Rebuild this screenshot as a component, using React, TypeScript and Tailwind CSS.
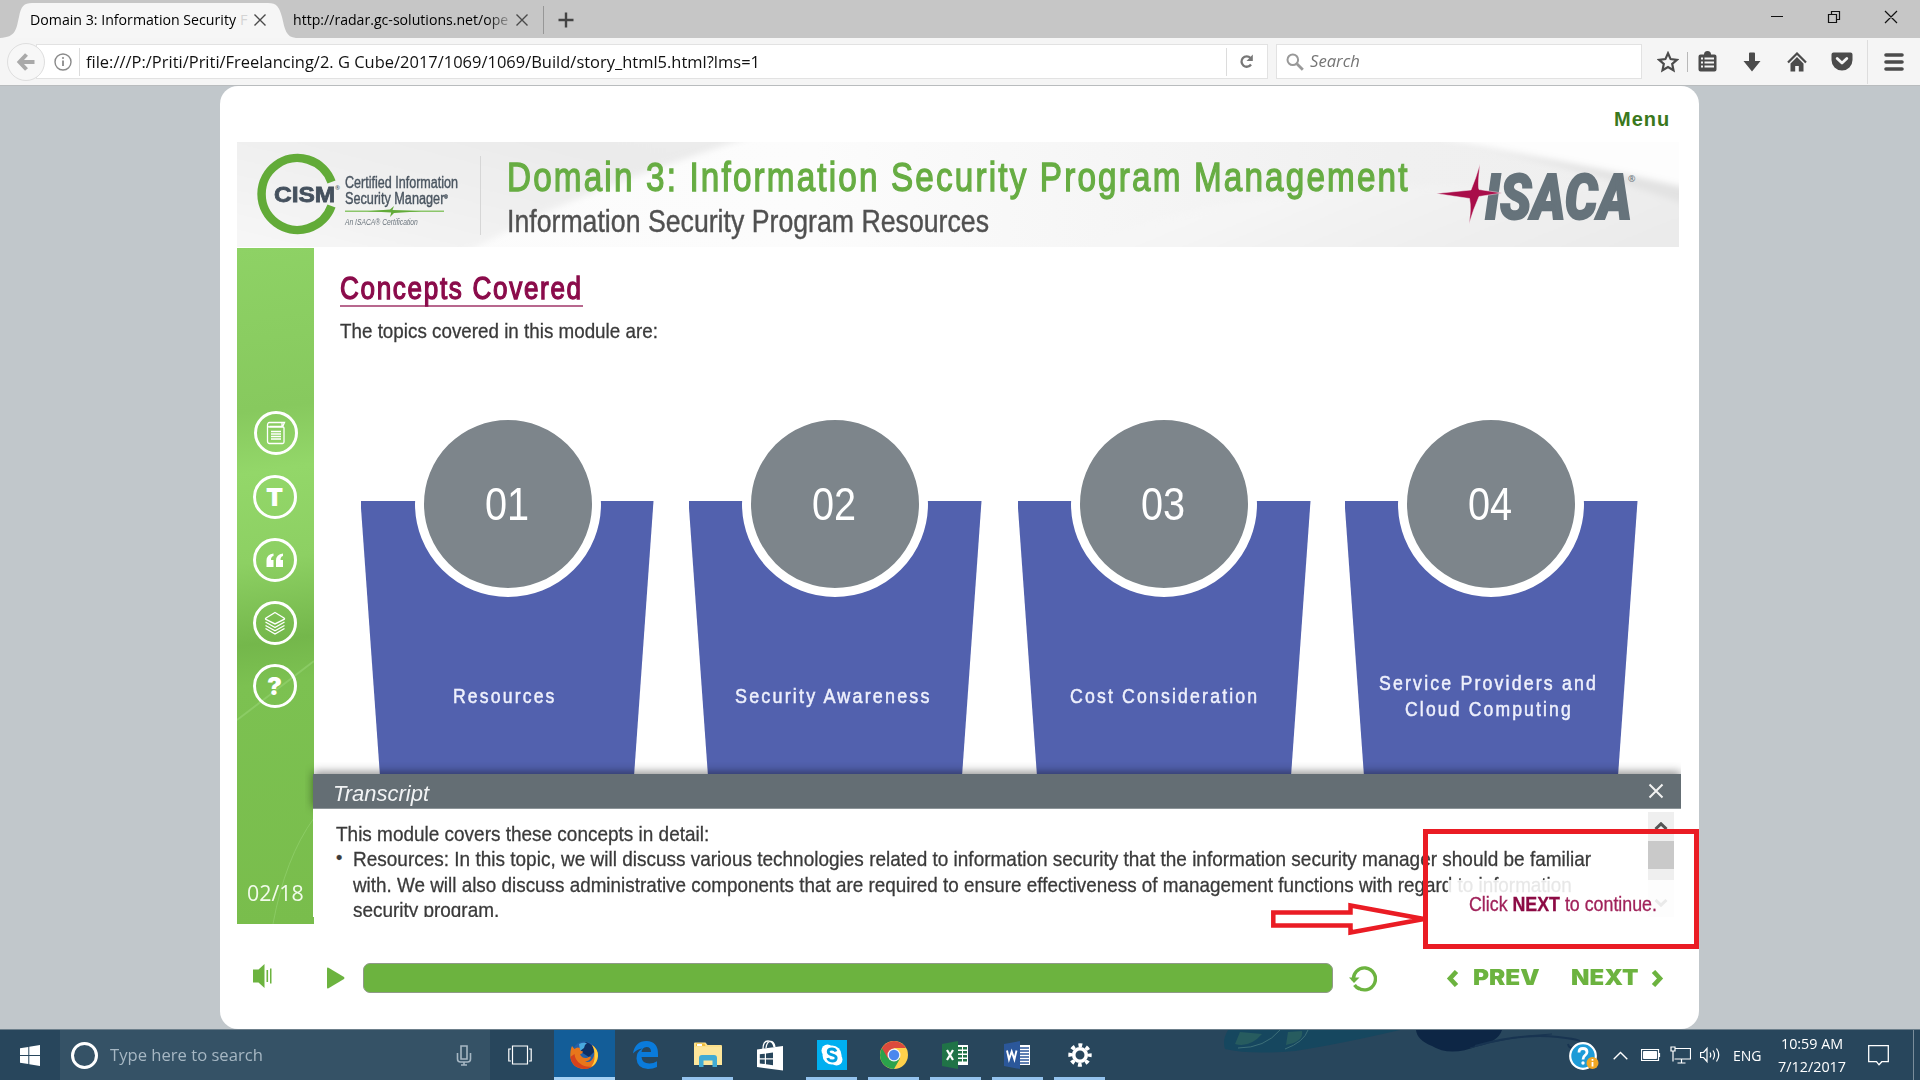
import { useLayoutEffect, useRef, useState, type ReactNode } from "react";

const sans = "font-['Liberation_Sans',sans-serif]";
const ui = "font-['Open_Sans','Noto_Sans',sans-serif]";

/* Single line of text condensed or stretched to fill the width of its box. */
function Fit({ className = "", children }: { className?: string; children: ReactNode }) {
  const outer = useRef<HTMLSpanElement>(null);
  const inner = useRef<HTMLSpanElement>(null);
  const [scale, setScale] = useState(1);
  useLayoutEffect(() => {
    if (outer.current && inner.current) {
      setScale(outer.current.offsetWidth / inner.current.offsetWidth);
    }
  }, []);
  return (
    <span ref={outer} className={`block shrink-0 whitespace-nowrap ${className}`}>
      <span ref={inner} className="inline-block origin-left align-top" style={{ transform: `scaleX(${scale})` }}>
        {children}
      </span>
    </span>
  );
}

function Cross({ className }: { className: string }) {
  return (
    <svg viewBox="0 0 14 14" className={className} fill="none" stroke="currentColor">
      <path d="M1.500 1.500l11 11M12.500 1.500l-11 11" strokeWidth="1.400" />
    </svg>
  );
}

function TabStrip() {
  return (
    <div className={`flex h-[38px] bg-[#c6c6c6] text-[14.5px] leading-[34px] text-black ${ui}`}>
      <div className="relative flex h-[38px] w-[296px] pl-[30px] pt-[3px]">
        <svg className="absolute inset-0 h-[38px] w-[296px]" viewBox="0 0 296 38">
          <path d="M0 38C16 37 16 30 19 17C21 6 24 3 32 3H268C277 3 279 7 282 17C285 30 286 37 296 38Z" fill="#f6f6f6" />
        </svg>
        <Fit className="relative w-[206px]">Domain 3: Information Security</Fit>
        <span className="relative ml-[4px] text-[#d4d4d4]">F</span>
        <Cross className="absolute left-[253px] top-[13px] h-[14px] w-[14px] text-[#4a4a4a]" />
      </div>
      <div className="relative flex w-[248px] pt-[3px]">
        <Fit className="ml-[-3px] w-[215px] [mask-image:linear-gradient(to_right,black_90%,rgba(0,0,0,0.25))]">
          http://radar.gc-solutions.net/ope
        </Fit>
        <Cross className="ml-[7px] mt-[10px] h-[14px] w-[14px] text-[#4a4a4a]" />
        <span className="ml-[14px] mt-[3px] h-[28px] w-px bg-[#979797]" />
      </div>
      <svg className="ml-[14px] mt-[12px] h-4 w-4" viewBox="0 0 16 16" stroke="#444" strokeWidth="2.400">
        <path d="M8 0.500v15M0.500 8h15" />
      </svg>
      <div className="ml-auto mt-[10px] flex pr-[22px]">
        <svg className="h-[14px] w-[128px]" viewBox="0 0 128 14" fill="none" stroke="#111" strokeWidth="1.200">
          <path d="M1 6.500h12M58.500 4.500h8v8h-8zM61.500 4.500v-3h8v8h-3M115 1l12 12M127 1l-12 12" />
        </svg>
      </div>
    </div>
  );
}

function NavBar() {
  return (
    <div className={`flex h-[48px] items-center border-b border-[#b9bcbe] bg-[#f5f5f5] ${ui}`}>
      <span className="relative z-10 ml-[7px] flex h-[38px] w-[38px] shrink-0 items-center justify-center rounded-full border border-[#dedede] bg-[#f7f7f7]">
        <svg className="h-[18px] w-[20px]" viewBox="0 0 20 18" fill="none" stroke="#a9a9a9" strokeWidth="4">
          <path d="M10.500 1.500L3.500 9l7 7.500M3 9h15.500" />
        </svg>
      </span>
      <div className="ml-[-9px] flex h-[35px] w-[1232px] shrink-0 items-center border border-[#e2e2e2] bg-white pl-[17px]">
        <svg className="h-[18px] w-[18px]" viewBox="0 0 18 18" fill="none" stroke="#8a8a8a">
          <circle cx="9" cy="9" r="8" strokeWidth="1.400" />
          <path d="M9 7.500v5.500" strokeWidth="1.800" />
          <circle cx="9" cy="5" r="0.700" strokeWidth="1" />
        </svg>
        <span className="ml-[7px] h-[28px] w-px bg-[#dcdcdc]" />
        <Fit className="ml-[6px] w-[674px] text-[16.5px] leading-[33px] text-[#111]">
          file:///P:/Priti/Priti/Freelancing/2. G Cube/2017/1069/1069/Build/story_html5.html?lms=1
        </Fit>
        <span className="ml-auto h-[28px] w-px bg-[#dcdcdc]" />
        <svg className="ml-[12px] mr-[13px] h-[15px] w-[15px]" viewBox="0 0 15 15" fill="none" stroke="#777" strokeWidth="2.300">
          <path d="M12 10.500A5.200 5.200 0 1 1 11.500 4" />
          <path d="M13.800 0.500v6.500h-6.300z" fill="#777" stroke="none" />
        </svg>
      </div>
      <div className="ml-[8px] flex h-[35px] w-[366px] shrink-0 items-center border border-[#e2e2e2] bg-white pl-[9px]">
        <svg className="h-[18px] w-[18px]" viewBox="0 0 18 18" fill="none" stroke="#999">
          <circle cx="6.800" cy="6.800" r="5.300" strokeWidth="2" />
          <path d="M10.800 10.800l6 6" strokeWidth="2.800" />
        </svg>
        <Fit className="ml-[6px] w-[50px] text-[16px] italic leading-[35px] text-[#757575]">Search</Fit>
      </div>
      <svg className="ml-[15px] h-[22px] w-[22px] shrink-0" viewBox="0 0 22 22" fill="none" stroke="#4b4b4b" strokeWidth="2.200">
        <path d="M11 2.300l2.600 5.800 6.300.7-4.700 4.200 1.300 6.300-5.500-3.200-5.500 3.200 1.300-6.300L2.100 8.800l6.300-.7z" />
      </svg>
      <span className="ml-[8px] h-[20px] w-px bg-[#b8b8b8]" />
      <svg className="ml-[10px] h-[21px] w-[19px]" viewBox="0 0 19 21" fill="none">
        <path d="M6 3.500a3.500 3.500 0 0 1 7 0h3.500a2 2 0 0 1 2 2v13a2 2 0 0 1-2 2h-14a2 2 0 0 1-2-2v-13a2 2 0 0 1 2-2z" fill="#4b4b4b" />
        <path d="M3 7.500h2M6.500 7.500h9.500M3 11.500h2M6.500 11.500h9.500M3 15.500h2M6.500 15.500h9.500" stroke="#f5f5f5" strokeWidth="2" />
      </svg>
      <svg className="ml-[26px] h-[20px] w-[18px]" viewBox="0 0 18 20">
        <path d="M6 1.500Q6 .5 7 .5h4q1 0 1 1V9h5.500L9 19.500.5 9H6z" fill="#4b4b4b" />
      </svg>
      <svg className="ml-[26px] h-[20px] w-[20px]" viewBox="0 0 20 20">
        <path d="M1 10.500L10 1.500l9 9" fill="none" stroke="#4b4b4b" strokeWidth="2.200" />
        <path d="M3.500 11.500L10 5l6.500 6.500v8h-4.700v-5.500H8.200v5.500H3.500z" fill="#4b4b4b" />
      </svg>
      <svg className="ml-[24px] h-[19px] w-[22px]" viewBox="0 0 22 19">
        <path d="M2.500.5h17a2 2 0 0 1 2 2V8a10.500 10.500 0 0 1-21 0V2.500a2 2 0 0 1 2-2z" fill="#4b4b4b" />
        <path d="M6.200 6.500L11 11l4.800-4.500" fill="none" stroke="#f5f5f5" strokeWidth="2.800" strokeLinecap="round" strokeLinejoin="round" />
      </svg>
      <span className="ml-[14px] h-[44px] w-px bg-[#dddddd]" />
      <svg className="ml-[16px] h-[18px] w-[20px]" viewBox="0 0 20 18" stroke="#4b4b4b" strokeWidth="3.600" strokeLinecap="round">
        <path d="M2 2h16M2 9h16M2 16h16" />
      </svg>
    </div>
  );
}

function CismLogo() {
  return (
    <div className="relative ml-[20px] flex w-[223px] shrink-0">
      <svg className="absolute left-0 top-[11px] h-[82px] w-[82px]" viewBox="0 0 82 82" fill="none" stroke="#62ab38" strokeWidth="8.500">
        <path d="M74.500 29A36 36 0 1 0 74.500 53" />
      </svg>
      <Fit className={`relative ml-[17px] w-[61px] pt-[40px] text-[22.500px] font-bold leading-[26px] text-[#45515e] [-webkit-text-stroke:0.8px_#45515e] ${sans}`}>
        CISM
      </Fit>
      <span className="relative mt-[42px] text-[6px] leading-[8px] text-[#45515e]">®</span>
      <div className={`relative ml-[5px] pt-[33px] text-[#4a5560] ${sans}`}>
        <Fit className="w-[113px] text-[16px] leading-[16px] [-webkit-text-stroke:0.4px]">Certified Information</Fit>
        <Fit className="w-[103px] text-[16px] leading-[15px] [-webkit-text-stroke:0.4px]">
          Security Manager<sup className="relative -top-[5px] align-baseline text-[6px] leading-none">®</sup>
        </Fit>
        <svg className="h-[12px] w-[99px]" viewBox="0 0 99 12">
          <path d="M0 4.600h99v1.300H0z" fill="#8cc66b" />
          <path d="M22 5.200L45 3.600 49 0l-1.500 4L76 5.200 49 7l-4 4 1.200-4.500z" fill="#62ab38" />
        </svg>
        <Fit className="w-[73px] text-[8.500px] italic leading-[9px] text-[#6b757d]">An ISACA® Certification</Fit>
      </div>
    </div>
  );
}

function IsacaLogo() {
  return (
    <div className="relative h-[105px] w-[205px] shrink-0">
      <Fit className="absolute left-[49px] top-[30px] w-[147px] font-['Roboto',sans-serif] text-[62px] font-black italic leading-[52px] text-[#66737b] [-webkit-text-stroke:2px_#66737b]">
        ISACA
      </Fit>
      <svg className="absolute left-[-2px] top-[22px] h-[60px] w-[68px]" viewBox="0 0 68 60">
        <path d="M46 0Q43.500 22 45 25.500L68 29 45 32.500Q39 46 35 60 37.500 44 35.500 34.500L2 29.500 37 26Q42 14 46 0z" fill="#a90d49" stroke="#f4f4f4" strokeWidth="0.500" />
      </svg>
      <span className="absolute left-[192px] top-[32px] text-[9px] leading-[10px] text-[#66737b]">®</span>
    </div>
  );
}

function Banner() {
  return (
    <div className="relative ml-[17px] flex h-[105px] w-[1442px] overflow-hidden bg-[#efefef]">
      <svg className="absolute inset-0 h-full w-full" viewBox="0 0 1442 105" preserveAspectRatio="none">
        <defs>
          <linearGradient id="bannerLeft" x1="0" x2="1" y1="1" y2="0">
            <stop offset="0" stopColor="#f8f8f8" />
            <stop offset="0.700" stopColor="#ebebeb" />
            <stop offset="1" stopColor="#ececec" />
          </linearGradient>
          <linearGradient id="bannerMid" x1="0" x2="1" y1="0" y2="0">
            <stop offset="0" stopColor="#fbfbfb" />
            <stop offset="0.400" stopColor="#fcfcfc" />
            <stop offset="0.800" stopColor="#f0f0f0" />
            <stop offset="1" stopColor="#efefef" />
          </linearGradient>
          <linearGradient id="bannerRight" x1="0" x2="1" y1="0" y2="0.300">
            <stop offset="0" stopColor="#fafafa" />
            <stop offset="1" stopColor="#ebebeb" />
          </linearGradient>
          <filter id="soft" x="-10%" y="-20%" width="120%" height="140%">
            <feGaussianBlur stdDeviation="3" />
          </filter>
        </defs>
        <path d="M0 0H1442V105H0z" fill="url(#bannerMid)" />
        <g filter="url(#soft)">
          <path d="M-20 -20H560Q400 30 300 74L200 125H-20z" fill="url(#bannerLeft)" />
          <path d="M820 125Q900 60 1130 46Q1300 40 1470 50V125z" fill="url(#bannerRight)" />
          <path d="M1205 -10H1470V60Q1350 25 1205 -4z" fill="#fdfdfd" />
          <path d="M1215 0Q1340 24 1460 66V48Q1350 22 1215 0z" fill="#e2e2e2" />
        </g>
      </svg>
      <CismLogo />
      <span className="relative mt-[14px] h-[79px] w-px bg-[#d6d6d6]" />
      <div className={`relative ml-[26px] w-[921px] pt-[13px] ${sans}`}>
        <Fit className="w-[903px] text-[40px] leading-[44px] tracking-[2.600px] text-[#67ad43] [-webkit-text-stroke:1.300px_#67ad43]">
          Domain 3: Information Security Program Management
        </Fit>
        <Fit className="w-[482px] pt-[4px] text-[31.500px] leading-[37px] text-[#505050] [-webkit-text-stroke:0.4px]">
          Information Security Program Resources
        </Fit>
      </div>
      <div className="ml-[8px]">
        <IsacaLogo />
      </div>
    </div>
  );
}

function Sidebar() {
  const ring = "flex h-[44px] w-[44px] items-center justify-center rounded-full border-[3px] border-white text-white";
  return (
    <div className="relative flex w-[77px] shrink-0 flex-col items-center overflow-hidden bg-[linear-gradient(172deg,#8ed265_0%,#87c95e_24%,#93d769_33%,#8dd063_46%,#74b74b_58%,#7cc151_64%,#79bd4c_100%)]">
      <svg className="absolute inset-0 h-full w-full" viewBox="0 0 77 676" fill="none" stroke="#9bd879">
        <path d="M0 472L77 413" strokeWidth="2" strokeOpacity="0.500" />
        <path d="M77 570Q48 610 36 676" strokeOpacity="0.500" />
      </svg>
      <div className="relative mr-[2px] mt-[163px] flex flex-col items-center gap-[19px]">
        <span className={`mb-px ml-[2px] ${ring}`}>
          <svg className="h-[24px] w-[22px]" viewBox="0 0 22 24" fill="none" stroke="white" strokeWidth="1.300">
            <path d="M2.500 4.500q0-3 2-3H17v4H4.500M17 1.500h2.500L17.500 6M2.500 4.500V20q0 2.500 2 2.500h13q1.500 0 1.500-1.500V7q0-1-1-1H5q-2.500 0-2.500-1.500M6 10.500h10M6 13h10M6 15.500h10M6 18h10" />
          </svg>
        </span>
        <span className={ring}>
          <span className="font-['Inter',sans-serif] text-[25px] font-black leading-none">T</span>
        </span>
        <span className={ring}>
          <svg className="h-[15px] w-[18px]" viewBox="0 0 18 15" fill="white">
            <path d="M7.500.5V3C5.500 3.500 5 5 5 7h2.500v7h-7V7.500Q.5 1.500 7.500.5zM17 .5V3c-2 .5-2.500 2-2.500 4H17v7h-7V7.500Q10 1.500 17 .5z" />
          </svg>
        </span>
        <span className={ring}>
          <svg className="h-[24px] w-[22px]" viewBox="0 0 22 24" fill="none" stroke="white" strokeWidth="1.400">
            <path d="M11 1.500L20 7q1 .8 0 1.500L11 13 2 8.500Q1 7.800 2 7zM1.500 11L11 16.500 20.500 11M1.500 14.500L11 19.800l9.500-5.300M1.500 17.500L11 23l9.500-5.500" />
          </svg>
        </span>
        <span className={ring}>
          <span className="font-['Inter',sans-serif] text-[25px] font-black leading-none">?</span>
        </span>
      </div>
      <Fit className={`relative mb-[19px] mt-auto w-[57px] text-[21px] leading-[24px] text-[#f1fbea] ${ui}`}>02/18</Fit>
    </div>
  );
}

const topics = [
  { n: "01", place: "", ring: "ml-[2px]", lines: [{ text: "Resources", w: "mr-[4px] w-[104px]" }] },
  { n: "02", place: "", ring: "ml-0", lines: [{ text: "Security Awareness", w: "mr-[4px] w-[197px]" }] },
  { n: "03", place: "ml-px -mr-px", ring: "ml-0", lines: [{ text: "Cost Consideration", w: "mr-0 w-[189px]" }] },
  {
    n: "04",
    place: "",
    ring: "ml-0",
    lines: [
      { text: "Service Providers and", w: "mr-[5px] w-[219px]" },
      { text: "Cloud Computing", w: "mr-[4px] w-[168px]" },
    ],
  },
];

function Topics() {
  return (
    <div className={`ml-[19.500px] mt-[66px] flex h-[363px] gap-[35px] ${sans}`}>
      {topics.map((t) => (
        <div key={t.n} className={`grid w-[293px] shrink-0 grid-cols-1 justify-items-center ${t.place}`}>
          <div className="mt-[90px] flex h-[273px] w-full flex-col items-center justify-center bg-[#5261ae] pt-[116px] [clip-path:polygon(0_0,100%_0,93.4%_100%,6.6%_100%)] [grid-area:1/1]">
            {t.lines.map((l) => (
              <Fit key={l.text} className={`text-[20.500px] leading-[26px] tracking-[2.500px] text-[#eef0fc] [-webkit-text-stroke:0.5px] ${l.w}`}>
                {l.text}
              </Fit>
            ))}
          </div>
          <div className={`relative z-10 flex h-[186px] w-[186px] items-center justify-center rounded-full border-[9px] border-white bg-[#7d858b] [grid-area:1/1] ${t.ring}`}>
            <Fit className="mr-[3px] w-[44px] text-[46px] leading-[50px] text-white">{t.n}</Fit>
          </div>
        </div>
      ))}
    </div>
  );
}

function Transcript() {
  return (
    <div className={`relative z-20 ml-[-1px] w-[1368px] [clip-path:inset(-12px_0_0_-8px)] ${sans}`}>
      <div className="flex h-[35px] items-center border-b border-[#8d9599] bg-[#646e74] pl-[20px] pr-[17px] shadow-[0_-2px_9px_rgba(0,0,0,0.45)]">
        <Fit className="mt-[6px] w-[96px] text-[21.500px] italic leading-[26px] text-[#f1f3f4]">Transcript</Fit>
        <svg className="mb-[1px] ml-auto h-[16px] w-[16px]" viewBox="0 0 16 16" stroke="#f2f2f2" strokeWidth="2">
          <path d="M1.500 1.500l13 13M14.500 1.500l-13 13" />
        </svg>
      </div>
      <div className="h-[108px] overflow-hidden bg-white pl-[23px] pt-[12px] text-[21px] leading-[25.400px] text-[#3a3a3a] [-webkit-text-stroke:0.3px]">
        <Fit className="w-[373px]">This module covers these concepts in detail:</Fit>
        <div className="flex">
          <span className="w-[17px] text-[18px]">•</span>
          <div>
            <Fit className="w-[1238px]">
              Resources: In this topic, we will discuss various technologies related to information security that the information security manager should be familiar
            </Fit>
            <Fit className="w-[1219px]">
              with. We will also discuss administrative components that are required to ensure effectiveness of management functions with regard to information
            </Fit>
            <Fit className="w-[146px]">security program.</Fit>
          </div>
        </div>
      </div>
      <div className="absolute right-[7px] top-[38px] flex h-[105px] w-[26px] flex-col items-center bg-[#efefef]">
        <svg className="mt-[10px] h-[8px] w-[14px]" viewBox="0 0 14 8" fill="none" stroke="#555" strokeWidth="3">
          <path d="M1.500 7L7 1.800 12.500 7" />
        </svg>
        <span className="mt-[11px] h-[28px] w-full bg-[#c9c9c9]" />
        <svg className="mt-[30px] h-[8px] w-[14px]" viewBox="0 0 14 8" fill="none" stroke="#555" strokeWidth="3">
          <path d="M1.500 1L7 6.200 12.500 1" />
        </svg>
      </div>
      <div className="absolute right-0 top-[106px] flex h-[44px] w-[233px] bg-white/88" />
      <Fit className="absolute right-[24px] top-[118px] w-[188px] text-[19.500px] leading-[24px] text-[#a0225a] [-webkit-text-stroke:0.3px]">
        Click <b className="text-[#8c0a44]">NEXT</b> to continue.
      </Fit>
    </div>
  );
}

function Player() {
  return (
    <div className="flex h-[105px] items-center">
      <svg className="ml-[33px] mb-[2px] h-[26px] w-[22px]" viewBox="0 0 22 26" fill="#6cb33f">
        <path d="M0 6.500h5.500L11.500 1v24L5.500 19.500H0zM13.500 7h1.600v12h-1.600zM17 5.500h1.500v15H17z" />
      </svg>
      <svg className="ml-[52px] mt-[3px] h-[22px] w-[18px]" viewBox="0 0 18 22" fill="#6cb33f">
        <path d="M0 1.500Q0 0 1.500.8L17 10q1 1 0 2L1.500 21.200Q0 22 0 20.500z" />
      </svg>
      <div className="ml-[18px] mt-[2px] h-[30px] w-[970px] rounded-[7px] border border-[#8f9a88] bg-[#6cb33f]" />
      <svg className="ml-[16px] mt-[5px] h-[28px] w-[28px]" viewBox="0 0 28 28" fill="none" stroke="#6cb33f" strokeWidth="3.400">
        <path d="M4.500 15A11 11 0 1 1 8 22" transform="rotate(-4 15 14)" />
        <path d="M0 12.500h10.500L5 18z" fill="#6cb33f" stroke="none" />
        <path d="M5.500 20a11.500 11.500 0 0 0 5 4" />
      </svg>
      <div className="ml-[69px] mt-px flex items-center font-['Inter',sans-serif] text-[21.500px] font-black leading-[26px] text-[#6cb33f]">
        <svg className="mt-[2px] h-[17px] w-[13px]" viewBox="0 0 13 17" fill="none" stroke="#6cb33f" strokeWidth="4.600">
          <path d="M10.500 1.500L4 8.500l6.500 7" />
        </svg>
        <Fit className="ml-[14px] w-[67px]">PREV</Fit>
        <Fit className="ml-[31px] w-[68px]">NEXT</Fit>
        <svg className="ml-[12px] mt-[2px] h-[17px] w-[13px]" viewBox="0 0 13 17" fill="none" stroke="#6cb33f" strokeWidth="4.600">
          <path d="M2.500 1.500L9 8.500l-6.500 7" />
        </svg>
      </div>
    </div>
  );
}

function Course() {
  return (
    <div className="h-[943px] w-[1479px] rounded-[18px] bg-white">
      <div className="flex h-[56px] justify-end pr-[29px] pt-[20px]">
        <Fit className={`w-[56px] text-[20px] font-bold leading-[26px] tracking-[1px] text-[#3a781c] ${sans}`}>Menu</Fit>
      </div>
      <Banner />
      <div className="ml-[17px] mt-px flex h-[676px]">
        <Sidebar />
        <div className="w-[1367px] pt-[24px]">
          <div className={`ml-[26px] ${sans}`}>
            <Fit className="w-[243px] border-b-2 border-[#b8688e] text-[31px] leading-[33px] tracking-[2px] text-[#8b0c4b] [-webkit-text-stroke:1.300px_#8b0c4b]">
              Concepts Covered
            </Fit>
            <Fit className="mt-[10px] w-[318px] pb-px text-[21px] leading-[27px] text-[#3a3a3a] [-webkit-text-stroke:0.3px]">
              The topics covered in this module are:
            </Fit>
          </div>
          <div className="ml-[27px]">
            <Topics />
          </div>
          <Transcript />
        </div>
      </div>
      <Player />
    </div>
  );
}

/* Red arrow and frame drawn over the page. */
function Callout() {
  return (
    <>
      <div className="absolute left-[1423px] top-[829px] z-30 h-[120px] w-[276px] border-[5px] border-[#ea1c24]" />
      <svg className="absolute left-[1270px] top-[900px] z-30 h-[38px] w-[158px]" viewBox="0 0 158 38" fill="white" stroke="#ea1c24" strokeWidth="4.500">
        <path d="M3.300 12.500H80.500V5.500L154 19 80.500 32.500V25.500H3.300z" />
      </svg>
    </>
  );
}

function Slot({ left, active, children }: { left: string; active?: boolean; children: ReactNode }) {
  return (
    <div className={`relative flex h-[50px] w-[51px] items-center justify-center ${left}`}>
      {children}
      {active && <span className="absolute bottom-0 left-0 h-[3px] w-full bg-[#94c3ee]" />}
    </div>
  );
}

function Taskbar() {
  return (
    <div className={`relative flex h-[51px] items-center border-t border-[#6d7f8b] bg-[#28465c] text-white ${ui}`}>
      <svg className="absolute left-[1220px] top-0 h-[26px] w-[360px]" viewBox="0 0 360 26" fill="none">
        <path d="M8 0H180Q120 14 75 21 30 25 5 19 2 10 8 0z" fill="#16475f" />
        <path d="M18 18Q45 18 60 0M65 19Q84 12 88 0" stroke="#3d6f78" />
        <path d="M15 14Q30 18 42 4L20 2zM66 15Q84 12 82 1L68 2z" fill="#275c5f" />
        <path d="M196 0H282Q278 12 258 16 230 27 212 16 197 10 196 0z" fill="#0d2645" />
        <path d="M255 16Q300 3 338 7T354 17q-5 2-6-3" stroke="#183451" strokeWidth="2" />
        <path d="M250 18Q290 6 332 4" stroke="#183451" />
      </svg>
      <svg className="ml-[20px] h-[21px] w-[20px]" viewBox="0 0 20 21" fill="white">
        <path d="M0 3.300L8.300 2v8H0zM9.300 1.800L20 0v10H9.300zM0 11h8.300v8L0 17.700zM9.300 11H20v10L9.300 19.200z" />
      </svg>
      <div className="ml-[20px] flex h-[50px] w-[430px] items-center bg-[#355266] pl-[11px]">
        <span className="h-[27px] w-[27px] rounded-full border-[3.500px] border-white" />
        <Fit className="ml-[12px] w-[153px] text-[16.500px] leading-[26px] text-[#a6b7c3]">Type here to search</Fit>
        <svg className="ml-auto mr-[18px] h-[21px] w-[16px]" viewBox="0 0 16 21" fill="none" stroke="#a6b7c3" strokeWidth="1.600">
          <path d="M5 1h6v13H5zM1.500 8v6q0 3 3 3h7q3 0 3-3V8M8 17v3M5 20h6" />
        </svg>
      </div>
      <svg className="ml-[18px] h-[20px] w-[24px]" viewBox="0 0 24 20" fill="none" stroke="white" strokeWidth="1.200">
        <path d="M4.500 1h15v18h-15zM3 4H.8v12H3M21 4h2.200v12H21" />
      </svg>
      <div className="relative ml-[22px] flex h-[50px] w-[61px] items-center justify-center bg-[#135d98]">
        <svg className="mr-[2px] h-[28px] w-[28px]" viewBox="0 0 28 28">
          <circle cx="14.500" cy="13" r="12.500" fill="#2560a8" />
          <path d="M16 1q8 2 8 10l-5 5-8-5q0-8 5-10z" fill="#0f2f63" />
          <path d="M9 3q4-2 8-1-3 2-3 5l-4 3z" fill="#49a8df" />
          <path d="M2 5l2.500 3Q7 5.500 10 7q-1 3 3 3.500 0 2-3 3 3 5 8 3 1-1 3-.5-1 4-6 4.500 6 2 8.500-4.500Q26 10 22 4q6 4 6 11-1 12-13.500 13Q2 27.500.3 16 0 9 2 5z" fill="#e8761b" />
          <path d="M22 4q6 4 6 11-1 8-7 11 4-5 3.500-11Q25 9 22 4z" fill="#ffcf3e" />
          <path d="M.3 16Q2 27 14 28q5 0 8-2.500-7 1-12-3Q5 19 4.500 13z" fill="#d5421d" />
        </svg>
        <span className="absolute bottom-0 left-0 h-[3px] w-full bg-[#a5d1f5]" />
      </div>
      <Slot left="ml-[5px]">
        <svg className="h-[28px] w-[26px]" viewBox="0 0 26 28" fill="#0a7bdb">
          <path d="M0 12.500Q2 0 13.500 0 25 .5 25 13v3H8.500q.5 6.500 8 6.500 4 0 7.500-2.200V26q-4 2-9 2Q4 27.500 3.500 17.500 3.500 10.500 9.500 7.500 4 8 0 12.500zM8.500 11h9.500q0-5-4.500-5-4.500.3-5 5z" />
        </svg>
      </Slot>
      <Slot left="ml-[11px]" active>
        <svg className="h-[26px] w-[28px]" viewBox="0 0 28 26">
          <path d="M0 3V1.500Q0 .5 1 .5h10.500l2 2.500H27q1 0 1 1v19H0z" fill="#fbe08c" />
          <path d="M0 5h28v18H0z" fill="#fde69b" />
          <path d="M2 1.500h8.500l1 2.500H2z" fill="#f0bd3a" />
          <path d="M3 2h5v2H3z" fill="#fff" />
          <path d="M5 25v-9q0-3 3-3h12q3 0 3 3v9h-4.500v-6.500h-9V25z" fill="#41abd4" />
        </svg>
      </Slot>
      <Slot left="ml-[11px]">
        <svg className="h-[31px] w-[26px]" viewBox="0 0 26 31">
          <path d="M6 9Q6 1 11 1t6 6M9 8Q10 1 14 1.500 17 2 18 7" fill="none" stroke="white" strokeWidth="1.300" />
          <path d="M0 9.500L26 6v24.500L0 27z" fill="white" />
          <path d="M2.800 14.200l5-.5v4.500h-5zM9 13.500l7-1v5.700H9zM2.800 19.500h5V24l-5-.5zM9 19.500h7v5.700L9 24.300z" fill="#28465c" />
        </svg>
      </Slot>
      <Slot left="ml-[11px]" active>
        <span className="flex h-[30px] w-[30px] items-center justify-center bg-[#00aff0]">
          <svg className="h-[24px] w-[24px]" viewBox="0 0 24 24">
            <circle cx="12" cy="12" r="9.500" fill="white" />
            <circle cx="7.500" cy="7.500" r="6" fill="white" />
            <circle cx="16.500" cy="16.500" r="6" fill="white" />
            <path d="M16 8.500Q15 6 12 6 8.200 6 8.200 8.800q0 2.200 4 3 4 .8 4 3.300Q16 18 12.200 18 8.500 18 7.800 15" fill="none" stroke="#00a0e0" strokeWidth="2.800" />
          </svg>
        </span>
      </Slot>
      <Slot left="ml-[11px]" active>
        <svg className="h-[28px] w-[28px]" viewBox="0 0 28 28">
          <circle cx="14" cy="14" r="14" fill="#ffd04b" />
          <path d="M14 14L1.900 7A14 14 0 0 0 14 28l6-10.500z" fill="#2ba24c" />
          <path d="M1.900 7A14 14 0 0 1 26.100 7H14L8 17.500z" fill="#dc4a3d" />
          <circle cx="14" cy="14" r="6.500" fill="#f3f3f3" />
          <circle cx="14" cy="14" r="5.200" fill="#4b87ee" />
        </svg>
        <span className="absolute bottom-0 right-0 h-[3px] w-[11px] bg-[#7197b5]" />
      </Slot>
      <Slot left="ml-[11px]" active>
        <svg className="h-[28px] w-[28px]" viewBox="0 0 28 28">
          <path d="M14 4h12v20H14z" fill="white" />
          <path d="M16 6h4v2.500h-4zM21 6h4v2.500h-4zM16 10h4v2.500h-4zM21 10h4v2.500h-4zM16 14h4v2.500h-4zM21 14h4v2.500h-4zM16 18h4v2.500h-4zM21 18h4v2.500h-4z" fill="#207347" />
          <path d="M0 3L16 0v28L0 25z" fill="#207347" />
          <path d="M5 9l6 10M11 9L5 19" stroke="white" strokeWidth="2.200" />
        </svg>
      </Slot>
      <Slot left="ml-[11px]" active>
        <svg className="h-[28px] w-[28px]" viewBox="0 0 28 28">
          <path d="M14 4h12v20H14z" fill="white" />
          <path d="M16 7h9M16 10h9M16 13h9M16 16h9M16 19h9M16 22h9" stroke="#2b579a" strokeWidth="1.500" />
          <path d="M0 3L16 0v28L0 25z" fill="#2b579a" />
          <path d="M3 9.500l2 9 2.700-8 2.700 8 2.100-9" fill="none" stroke="white" strokeWidth="1.900" />
        </svg>
      </Slot>
      <Slot left="ml-[11px]" active>
        <svg className="h-[24px] w-[24px]" viewBox="0 0 24 24" fill="none" stroke="white">
          <circle cx="12" cy="12" r="6.300" strokeWidth="3.600" />
          <circle cx="12" cy="12" r="9.800" strokeWidth="3.800" strokeDasharray="3.850 3.850" strokeDashoffset="1.900" />
        </svg>
      </Slot>
      <svg className="relative ml-[464px] mt-[2px] h-[28px] w-[30px]" viewBox="0 0 30 28">
        <circle cx="14" cy="14" r="12.800" fill="#1e9bd7" stroke="white" strokeWidth="2.200" />
        <path d="M10 10.500Q10 6.500 14 6.500t4 3.500q0 2-2 3.300T14 17.500" fill="none" stroke="white" strokeWidth="2.800" />
        <circle cx="14" cy="21" r="1.700" fill="white" />
        <circle cx="23.500" cy="21" r="6" fill="#f0a724" />
        <path d="M23.500 20v4.500M23.500 17v1.800" stroke="white" strokeWidth="1.800" />
      </svg>
      <svg className="ml-[14px] h-[9px] w-[15px]" viewBox="0 0 15 9" fill="none" stroke="white" strokeWidth="1.400">
        <path d="M.7 8.300L7.500 1.500l6.800 6.800" />
      </svg>
      <svg className="ml-[13px] h-[12px] w-[20px]" viewBox="0 0 20 12" fill="none" stroke="white">
        <path d="M.5.5h17v11H.5zM18.500 4v4" strokeWidth="1.200" />
        <path d="M2.500 2.500h13v7h-13z" fill="white" />
      </svg>
      <svg className="ml-[9px] h-[18px] w-[21px]" viewBox="0 0 21 18" fill="none" stroke="white" strokeWidth="1.200">
        <path d="M5.500 2.500h15v10.500h-16M1 1h4v4H1zM3 5v10.500M11.500 13v4M7.500 17h8" />
      </svg>
      <svg className="ml-[9px] h-[18px] w-[21px]" viewBox="0 0 21 18" fill="none" stroke="white" strokeWidth="1.200">
        <path d="M.6 6.500h3L7 2.500v13l-3.400-4h-3zM10 6.500q1.500 2.500 0 5M13 4.500q3 4.500 0 9M16.500 2.500q4.500 6.500 0 13" />
      </svg>
      <Fit className="ml-[12px] w-[29px] text-[15px] leading-[20px]">ENG</Fit>
      <div className="ml-[15px] flex w-[69px] flex-col items-center text-[15px] leading-[23px]">
        <Fit className="w-[62px]">10:59 AM</Fit>
        <Fit className="w-[68px]">7/12/2017</Fit>
      </div>
      <svg className="ml-[22px] mt-px h-[21px] w-[21px]" viewBox="0 0 21 21" fill="none" stroke="white" strokeWidth="1.300">
        <path d="M.7.700h19.600v16h-6.500L11 19.800 8.500 16.700H.7z" />
      </svg>
      <span className="ml-[24px] h-[50px] w-px bg-[#7a8d9b]" />
    </div>
  );
}

export default function App() {
  return (
    <div className="relative flex h-[1080px] w-[1920px] flex-col overflow-hidden bg-[#c1c7cb]">
      <TabStrip />
      <NavBar />
      <div className="flex h-[943px] pl-[220px]">
        <Course />
      </div>
      <Taskbar />
      <Callout />
    </div>
  );
}
